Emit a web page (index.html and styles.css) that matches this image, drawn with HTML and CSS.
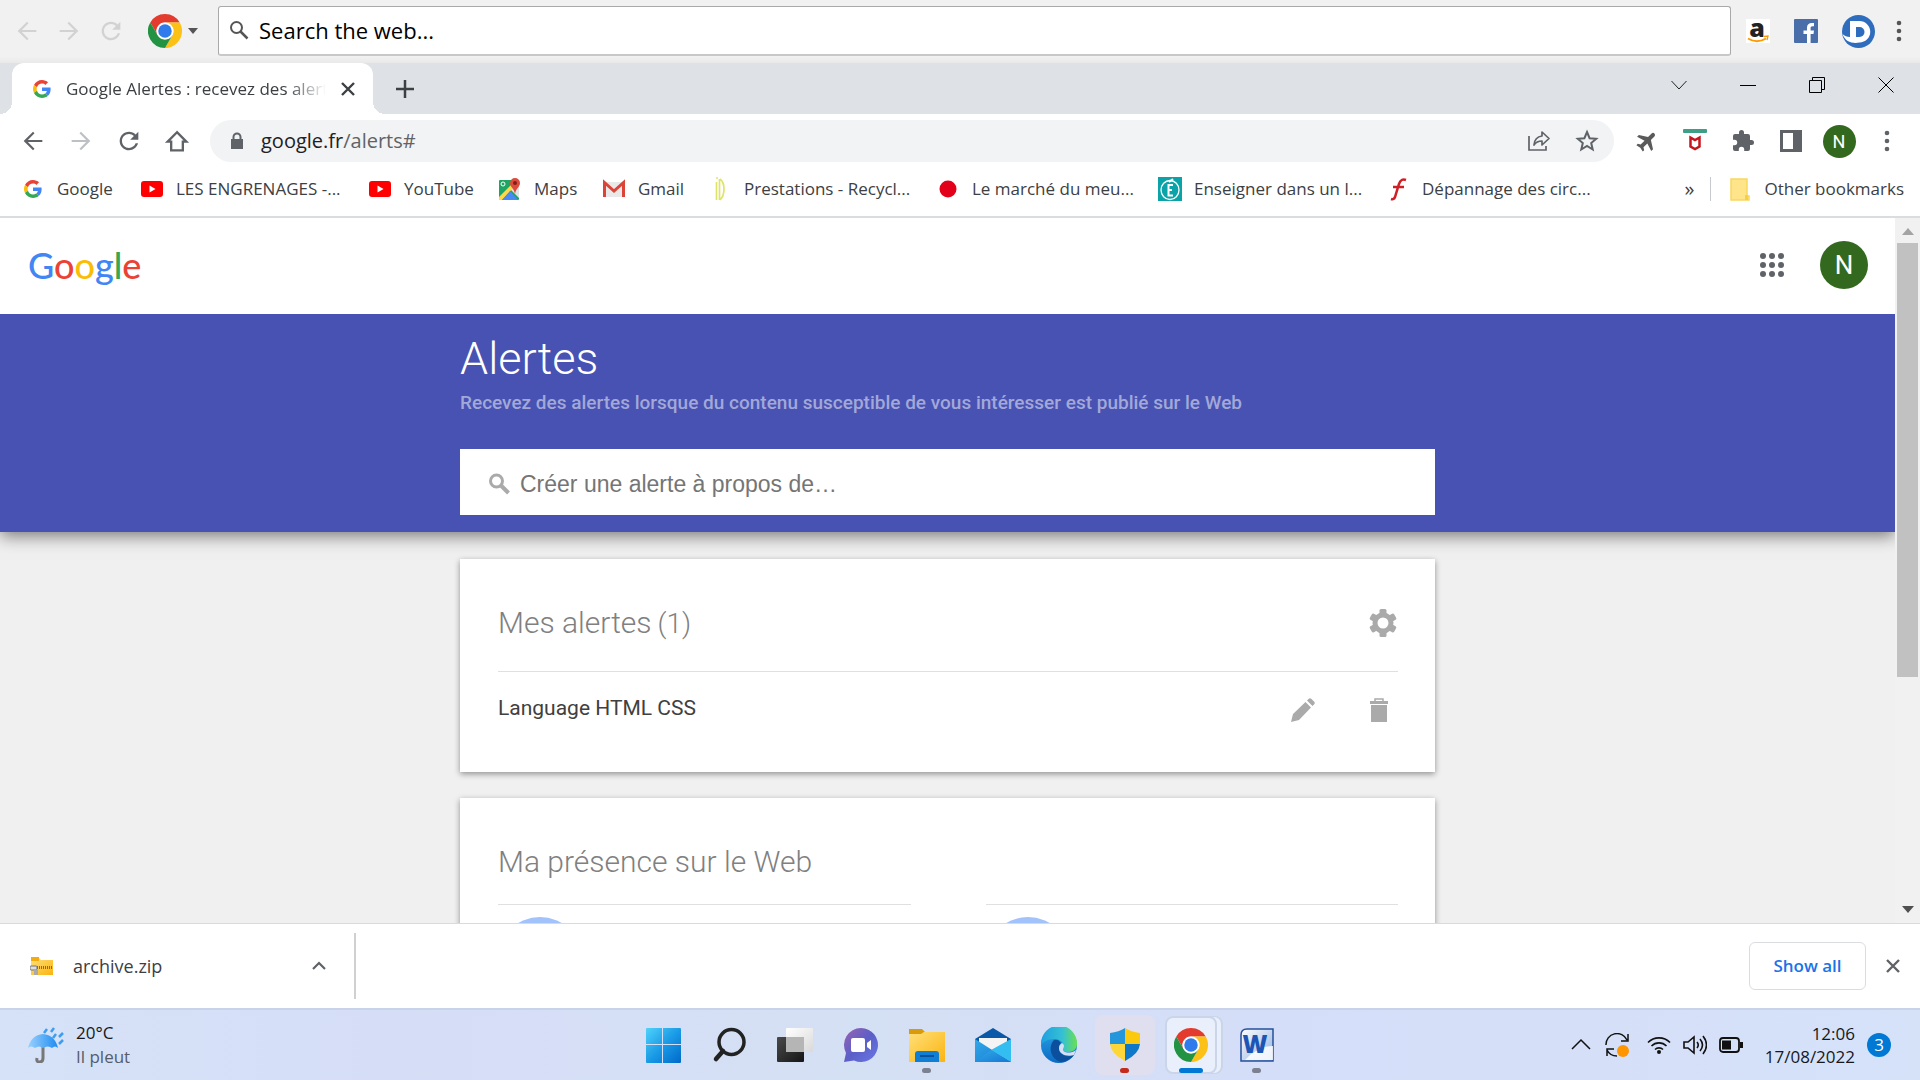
FILE: index.html
```html
<!DOCTYPE html>
<html lang="fr">
<head>
<meta charset="utf-8">
<title>Google Alertes</title>
<link rel="stylesheet" href="styles.css">
</head>
<body>
<svg class="defs" aria-hidden="true">
  <defs>
    <linearGradient id="win" x1="0" y1="0" x2="1" y2="1"><stop offset="0" stop-color="#4fd3fb"/><stop offset=".5" stop-color="#1a9be6"/><stop offset="1" stop-color="#0069c9"/></linearGradient>
    <linearGradient id="dark" x1="0" y1="0" x2="1" y2="1"><stop offset="0" stop-color="#4a4a4a"/><stop offset="1" stop-color="#151515"/></linearGradient>
    <linearGradient id="light" x1="0" y1="0" x2="1" y2="1"><stop offset="0" stop-color="#fff"/><stop offset="1" stop-color="#d9d9d9"/></linearGradient>
    <linearGradient id="chat" x1="0" y1="0" x2="1" y2="1"><stop offset="0" stop-color="#9a63b0"/><stop offset=".5" stop-color="#5b5fc7"/><stop offset="1" stop-color="#6a78e8"/></linearGradient>
    <linearGradient id="gold" x1="0" y1="0" x2="1" y2="1"><stop offset="0" stop-color="#ffe07a"/><stop offset="1" stop-color="#fbb411"/></linearGradient>
    <linearGradient id="edge1" x1="0" y1="0" x2="1" y2="0"><stop offset="0" stop-color="#1e9fe0"/><stop offset=".6" stop-color="#35c1d3"/><stop offset="1" stop-color="#6be04f"/></linearGradient>
    <linearGradient id="edge2" x1="0" y1="0" x2="0" y2="1"><stop offset="0" stop-color="#2aa5e8"/><stop offset="1" stop-color="#0b6bc4"/></linearGradient>
    <linearGradient id="mail" x1="0" y1="0" x2="1" y2="1"><stop offset="0" stop-color="#33a9e8"/><stop offset="1" stop-color="#1478d4"/></linearGradient>
    <linearGradient id="rain" x1="0" y1="0" x2="1" y2="0"><stop offset="0" stop-color="#9bd0ff"/><stop offset="1" stop-color="#1c8df0"/></linearGradient>
    <linearGradient id="word" x1="0" y1="0" x2="1" y2="1"><stop offset="0" stop-color="#fff"/><stop offset="1" stop-color="#8eb0e0"/></linearGradient>
  </defs>
  <symbol id="i-back" viewBox="0 0 24 24"><path fill="currentColor" d="M20 11.100H7.600l5.700-5.700L12 4l-8 8 8 8 1.300-1.400-5.700-5.700H20z"/></symbol>
  <symbol id="i-fwd" viewBox="0 0 24 24"><path fill="currentColor" d="M4 11.100h12.400l-5.700-5.700L12 4l8 8-8 8-1.300-1.400 5.700-5.700H4z"/></symbol>
  <symbol id="i-reload" viewBox="0 0 24 24"><path fill="currentColor" d="M17.650 6.350C16.200 4.900 14.210 4 12 4c-4.420 0-7.990 3.580-7.990 8s3.570 8 7.990 8c3.730 0 6.840-2.550 7.730-6h-2.080c-.82 2.330-3.040 4-5.650 4-3.310 0-6-2.690-6-6s2.690-6 6-6c1.660 0 3.140.69 4.220 1.780L13 11h7V4z"/></symbol>
  <symbol id="i-home" viewBox="0 0 24 24"><path fill="none" stroke="currentColor" stroke-width="2" d="M12 4.500l-8 8h3V20h10v-7.500h3z"/></symbol>
  <symbol id="i-search" viewBox="0 0 20 20"><circle cx="7.500" cy="7.500" r="5.500" fill="none" stroke="currentColor" stroke-width="2"/><path d="M11.500 11.500l7 7" stroke="currentColor" stroke-width="2.500"/></symbol>
  <symbol id="i-dots" viewBox="0 0 24 24"><g fill="currentColor"><circle cx="12" cy="4" r="2.300"/><circle cx="12" cy="12" r="2.300"/><circle cx="12" cy="20" r="2.300"/></g></symbol>
  <symbol id="i-x" viewBox="0 0 14 14"><path d="M1 1l12 12M13 1L1 13" stroke="currentColor" stroke-width="2.400"/></symbol>
  <symbol id="i-up" viewBox="0 0 14 14"><path d="M1 10l6-6 6 6" fill="none" stroke="currentColor" stroke-width="2.200"/></symbol>
  <symbol id="i-chrome" viewBox="0 0 48 48"><path fill="#e33b2e" d="M24 12h20.780A24 24 0 0 0 3.210 12L13.600 30A12 12 0 0 1 24 12z"/><path fill="#fbc116" d="M34.400 30L24 48a24 24 0 0 0 20.780-36H24a12 12 0 0 1 10.400 18z"/><path fill="#229342" d="M13.600 30L3.210 12A24 24 0 0 0 24 48l10.400-18a12 12 0 0 1-20.800 0z"/><circle cx="24" cy="24" r="12" fill="#fff"/><circle cx="24" cy="24" r="9.500" fill="#2f7bec"/></symbol>
  <symbol id="i-g" viewBox="0 0 48 48"><path fill="#ea4335" d="M24 9.500c3.540 0 6.710 1.220 9.210 3.600l6.850-6.850C35.900 2.380 30.470 0 24 0 14.620 0 6.510 5.380 2.560 13.220l7.980 6.190C12.430 13.720 17.740 9.500 24 9.500z"/><path fill="#4285f4" d="M46.980 24.550c0-1.570-.15-3.090-.38-4.550H24v9.020h12.940c-.58 2.960-2.260 5.480-4.780 7.180l7.730 6c4.510-4.180 7.090-10.360 7.090-17.650z"/><path fill="#fbbc05" d="M10.530 28.590c-.48-1.450-.76-2.990-.76-4.590s.27-3.140.76-4.590l-7.980-6.190C.92 16.460 0 20.120 0 24s.92 7.540 2.560 10.780z"/><path fill="#34a853" d="M24 48c6.480 0 11.930-2.130 15.890-5.810l-7.730-6c-2.150 1.450-4.920 2.300-8.160 2.300-6.260 0-11.570-4.220-13.470-9.910l-7.980 6.190C6.510 42.620 14.620 48 24 48z"/></symbol>
  <symbol id="i-yt" viewBox="0 0 24 24"><rect x="1" y="4" width="22" height="16" rx="3" fill="#f00"/><path d="M9.500 8.500v7l6-3.500z" fill="#fff"/></symbol>
</svg>

<header class="launcher">
  <nav class="launcher-nav">
    <button aria-label="Back"><svg class="ic28"><use href="#i-back"/></svg></button>
    <button aria-label="Forward"><svg class="ic28"><use href="#i-fwd"/></svg></button>
    <button aria-label="Reload"><svg class="ic28"><use href="#i-reload"/></svg></button>
  </nav>
  <button class="engine" aria-label="Search engine"><svg class="ic34"><use href="#i-chrome"/></svg><svg class="caret" viewBox="0 0 10 6"><path d="M0 0h10L5 6z" fill="#555"/></svg></button>
  <label class="websearch"><svg class="ic20"><use href="#i-search"/></svg><input type="text" aria-label="Search the web" placeholder="Search the web..."></label>
  <div class="launcher-apps">
    <a href="#" aria-label="Amazon"><svg class="ic24 open" viewBox="0 0 24 24"><rect width="24" height="24" fill="#fff"/><text x="11" y="18" text-anchor="middle" font-family="Open Sans, sans-serif" font-weight="800" font-size="25" fill="#222">a</text><path d="M2 19.500q9 5.500 18 0" fill="none" stroke="#f90" stroke-width="2"/><path d="M18 17.500l4-.5-1 4" fill="none" stroke="#f90" stroke-width="1.300"/></svg></a>
    <a href="#" aria-label="Facebook"><svg class="ic24" viewBox="0 0 24 24"><rect width="24" height="24" rx="1" fill="#4a6ea9"/><path fill="#fff" d="M13 24v-9h-3.500v-3.600H13V8.600C13 5.500 15 4 17.700 4c1.300 0 2.300.1 2.300.1v3.200h-1.500c-1.500 0-1.900.8-1.900 1.800v2.300H20l-.5 3.600h-2.900v9z"/></svg></a>
    <a href="#" aria-label="D"><svg class="ic33" viewBox="0 0 33 33"><circle cx="16.500" cy="16.500" r="16.500" fill="#2e6cbd"/><path fill="#fff" d="M8 6h9.500a10.500 10.500 0 0 1 0 21.500C11 29 3 27 .5 19q3 3 7.500 3z"/><path fill="#2e6cbd" d="M14 12h3.500a5 5 0 0 1 0 10H14z"/></svg></a>
    <button aria-label="More"><svg class="ic24"><use href="#i-dots"/></svg></button>
  </div>
</header>

<div class="tabstrip">
  <div class="tab"><svg class="ic18"><use href="#i-g"/></svg><span class="tab-title">Google Alertes : recevez des alertes</span><button aria-label="Close tab"><svg class="ic14"><use href="#i-x"/></svg></button></div>
  <button class="newtab" aria-label="New tab"><svg class="ic18" viewBox="0 0 18 18"><path d="M9 0v18M0 9h18" stroke="currentColor" stroke-width="2.500"/></svg></button>
  <div class="winctl">
    <button aria-label="Tab search"><svg class="ic16" viewBox="0 0 16 16"><path d="M.5 4l7.500 8 7.500-8" fill="none" stroke="#222"/></svg></button>
    <button aria-label="Minimize"><svg class="ic16" viewBox="0 0 16 16"><path d="M0 8.500h16" stroke="#000"/></svg></button>
    <button aria-label="Restore"><svg class="ic16" viewBox="0 0 16 16"><path d="M.5 3.500h12v12H.5zM3.500 3V.5h12v12H13" fill="none" stroke="#000"/></svg></button>
    <button aria-label="Close"><svg class="ic16" viewBox="0 0 16 16"><path d="M.5.5l15 15M15.500.5l-15 15" stroke="#000"/></svg></button>
  </div>
</div>

<div class="toolbar">
  <button aria-label="Back"><svg class="ic28"><use href="#i-back"/></svg></button>
  <button class="faded" aria-label="Forward"><svg class="ic28"><use href="#i-fwd"/></svg></button>
  <button aria-label="Reload"><svg class="ic28"><use href="#i-reload"/></svg></button>
  <button aria-label="Home"><svg class="ic28"><use href="#i-home"/></svg></button>
  <div class="omnibox">
    <svg class="ic20" viewBox="0 0 20 20"><path fill="#5f6368" d="M4 8h12v10H4z"/><path d="M6.500 8V6a3.500 3.500 0 0 1 7 0v2" fill="none" stroke="#5f6368" stroke-width="2"/></svg>
    <span class="url">google.fr<span>/alerts#</span></span>
    <button aria-label="Share"><svg class="ic24" viewBox="0 0 24 24"><g fill="none" stroke="currentColor" stroke-width="1.700"><path d="M2 7v14h17v-4"/><path d="M7 16c.5-6 3.500-8.500 8-9V3l7 6.500-7 6.500v-4c-4 0-6 1-8 4z" stroke-linejoin="round"/></g></svg></button>
    <button aria-label="Bookmark"><svg class="ic24" viewBox="0 0 24 24"><path d="M12 3l2.600 6.200 6.600.5-5 4.300 1.500 6.500L12 17l-5.700 3.500L7.800 14l-5-4.300 6.600-.5z" fill="none" stroke="currentColor" stroke-width="2"/></svg></button>
  </div>
  <button aria-label="Flights"><svg class="ic24" viewBox="0 0 24 24"><path transform="rotate(45 12 12)" fill="#5a5a5a" d="M22 16v-2.500l-8-5V3.500a2 2 0 0 0-4 0v5l-8 5V16l8-2.500V19l-2.500 1.500V22.500l4.500-1 4.500 1v-2L14 19v-5.500z"/></svg></button>
  <button aria-label="Security"><svg class="ic24" viewBox="0 0 24 24"><rect y="0" width="24" height="4" rx="1" fill="#3c9f86"/><path d="M7.500 8.500l4.500 2.500 4.500-2.500v9L12 20l-4.500-2.500z" fill="none" stroke="#c4161c" stroke-width="2.500"/></svg></button>
  <button aria-label="Extensions"><svg class="ic24" viewBox="0 0 24 24"><path fill="currentColor" d="M20.500 11H19V7a2 2 0 0 0-2-2h-4V3.500a2.500 2.500 0 0 0-5 0V5H4a2 2 0 0 0-2 2v3.800h1.500a2.700 2.700 0 0 1 0 5.400H2V20a2 2 0 0 0 2 2h3.800v-1.500a2.700 2.700 0 0 1 5.400 0V22H17a2 2 0 0 0 2-2v-4h1.500a2.500 2.500 0 0 0 0-5z"/></svg></button>
  <button aria-label="Side panel"><svg class="ic24" viewBox="0 0 24 24"><path fill="currentColor" fill-rule="evenodd" d="M1 1h22v22H1zm3 3v16h10V4z"/></svg></button>
  <button aria-label="Profile"><span class="avatar small">N</span></button>
  <button aria-label="Menu"><svg class="ic24"><use href="#i-dots"/></svg></button>
</div>

<nav class="bookmarks">
  <a href="#"><svg class="ic24" viewBox="0 0 24 24"><use href="#i-g" x="3" y="3" width="18" height="18"/></svg>Google</a>
  <a href="#"><svg class="ic24"><use href="#i-yt"/></svg>LES ENGRENAGES -...</a>
  <a href="#"><svg class="ic24"><use href="#i-yt"/></svg>YouTube</a>
  <a href="#"><svg class="ic24" viewBox="0 0 24 24"><rect x="1" y="3" width="20" height="20" rx="1" fill="#1fa463"/><path d="M21 6v15L12 12z" fill="#dfe3e6"/><path d="M1 20L15 6l2 3L4 23H1z" fill="#fdd84b"/><path d="M4 23l8-9 8 9z" fill="#4a89f3"/><path d="M17 1a5 5 0 0 1 5 5c0 4-4 5-5 11-1-6-5-7-5-11a5 5 0 0 1 5-5z" fill="#dd4b3e"/><circle cx="17" cy="6" r="2" fill="#7d2117"/><circle cx="5" cy="7" r="2" fill="none" stroke="#fff"/></svg>Maps</a>
  <a href="#"><svg class="ic24" viewBox="0 0 24 24"><path d="M2 5h20v15H2z" fill="#e9e9e9"/><path d="M2.500 20V5.500L12 14l9.500-8.500V20" fill="none" stroke="#db4437" stroke-width="3"/></svg>Gmail</a>
  <a href="#"><svg class="ic24" viewBox="0 0 24 24"><path d="M8.500 5v18M11.500 2v21M12 2q4 3 4 10t-4 11M8 1h2" fill="none" stroke="#dfe36a" stroke-width="1.700"/></svg>Prestations - Recycl...</a>
  <a href="#"><svg class="ic24" viewBox="0 0 24 24"><circle cx="12" cy="12" r="8.500" fill="#e3001b"/></svg>Le marché du meu...</a>
  <a href="#"><svg class="ic24" viewBox="0 0 24 24"><rect width="24" height="24" fill="#0aa3a8"/><ellipse cx="12" cy="13" rx="9" ry="9.500" fill="none" stroke="#fff" stroke-width="1.300"/><path d="M15 8h-4.500v10.500H15M10.500 13H14M11 5l4-3" fill="none" stroke="#fff" stroke-width="2"/></svg>Enseigner dans un l...</a>
  <a href="#"><svg class="ic24" viewBox="0 0 24 24"><path d="M20 3q-5-2-7 4L9 20q-1 3-4 2M7 10h11" fill="none" stroke="#cf1f26" stroke-width="2.500"/></svg>Dépannage des circ...</a>
  <button class="more" aria-label="More bookmarks">»</button>
  <a href="#" class="other"><svg class="ic24" viewBox="0 0 24 24"><path d="M3 2h16v17h2v4H3z" fill="#ffe48a" stroke="#f9d85d" stroke-width="1.500"/><path d="M17 23v-5h3v5z" fill="#f6cf45"/></svg>Other bookmarks</a>
</nav>

<div class="viewport">
  <main class="page">
    <div class="ghead">
      <a href="#" class="glogo" aria-label="Google"><span class="b">G</span><span class="r">o</span><span class="y">o</span><span class="b">g</span><span class="g">l</span><span class="r">e</span></a>
      <button aria-label="Applications"><svg class="ic24" viewBox="0 0 24 24"><g fill="#5f6368"><circle cx="3" cy="3" r="3"/><circle cx="12" cy="3" r="3"/><circle cx="21" cy="3" r="3"/><circle cx="3" cy="12" r="3"/><circle cx="12" cy="12" r="3"/><circle cx="21" cy="12" r="3"/><circle cx="3" cy="21" r="3"/><circle cx="12" cy="21" r="3"/><circle cx="21" cy="21" r="3"/></g></svg></button>
      <button class="account" aria-label="Compte"><span class="avatar">N</span></button>
    </div>
    <section class="hero">
      <div class="column">
        <h1>Alertes</h1>
        <p>Recevez des alertes lorsque du contenu susceptible de vous intéresser est publié sur le Web</p>
        <label class="create"><svg class="ic22" viewBox="0 0 22 22"><circle cx="8.500" cy="8" r="6" fill="none" stroke="#aaa" stroke-width="3"/><path d="M13 12.500l7.500 7.500" stroke="#aaa" stroke-width="4"/></svg><input type="text" aria-label="Créer une alerte" placeholder="Créer une alerte à propos de…"></label>
      </div>
    </section>
    <div class="column cards">
      <section class="card">
        <div class="card-head">
          <h2>Mes alertes <span>(1)</span></h2>
          <button aria-label="Paramètres"><svg class="ic28" viewBox="0 0 28 28"><g fill="#aaa"><rect x="10.500" y="0" width="7" height="28" rx="1.500"/><rect x="10.500" y="0" width="7" height="28" rx="1.500" transform="rotate(60 14 14)"/><rect x="10.500" y="0" width="7" height="28" rx="1.500" transform="rotate(120 14 14)"/><circle cx="14" cy="14" r="10.500"/></g><circle cx="14" cy="14" r="5.500" fill="#fff"/></svg></button>
        </div>
        <div class="alert-row">
          <a href="#">Language HTML CSS</a>
          <button aria-label="Modifier"><svg class="ic24" viewBox="0 0 24 24"><path fill="#aaa" d="M0 24l2-8L14.500 4l5.500 5.500L8 22zM16 2.500l1.500-1.500q1.500-1.500 3 0L23 3.500q1.500 1.500 0 3L21.500 8z"/></svg></button>
          <button aria-label="Supprimer"><svg class="ic24" viewBox="0 0 24 24"><path fill="#aaa" d="M4 7h16v17H4zM3 3h18v3H3z"/><path d="M8 3V1h8v2" fill="none" stroke="#aaa" stroke-width="1.500"/></svg></button>
        </div>
      </section>
      <section class="card">
        <div class="card-head presence"><h2>Ma présence sur le Web</h2></div>
        <div class="people"><div><span class="disc"></span></div><div><span class="disc"></span></div></div>
      </section>
    </div>
  </main>
  <div class="scrollbar"><svg class="arrow" viewBox="0 0 12 7"><path d="M0 7l6-7 6 7z" fill="#a3a3a3"/></svg><div class="thumb"></div><svg class="arrow" viewBox="0 0 12 7"><path d="M0 0h12L6 7z" fill="#505050"/></svg></div>
</div>

<div class="downloads">
  <div class="file">
    <svg class="ic24" viewBox="0 0 24 24"><path d="M1 4h8l2 2h12v15H1z" fill="url(#gold)"/><path d="M1 3h8v4H1z" fill="#f2ac10"/><path d="M7 13.500h16" stroke="#6d6d6d" stroke-width="3" stroke-dasharray="1 1"/><rect x="0" y="12" width="7" height="4" rx="1" fill="#ddd" stroke="#777"/><rect x="4" y="16" width="4" height="5" fill="#aaa"/></svg>
    <span>archive.zip</span>
    <button aria-label="Options"><svg class="ic14"><use href="#i-up"/></svg></button>
  </div>
  <button class="showall">Show all</button>
  <button class="dl-close" aria-label="Close"><svg class="ic14"><use href="#i-x"/></svg></button>
</div>

<footer class="taskbar">
  <div class="weather">
    <svg class="ic36" viewBox="0 0 36 36"><path d="M15 19v12q0 4-3.500 4T9 31" fill="none" stroke="#777" stroke-width="3"/><path d="M0 21Q3 8 15 7q12 1 15 14-3-3-6 0-4-3-9 0-4-3-8 0-4-3-7 0z" fill="url(#rain)"/><path d="M16 6l3-4M23 5l3-4M25 11l3-4M31 10l4-4M31 17l4-4" stroke="#3d9df0" stroke-width="2.500"/></svg>
    <div><div>20°C</div><div class="muted">Il pleut</div></div>
  </div>
  <div class="apps">
    <button aria-label="Start"><svg class="ic36" viewBox="0 0 36 36"><path fill="url(#win)" d="M1 2q0-1 1-1h15v16H1zM18 1h17q1 0 1 1v15H18zM1 18h16v18H2q-1 0-1-1zM18 18h18v17q0 1-1 1H18z"/></svg></button>
    <button aria-label="Search"><svg class="ic36" viewBox="0 0 36 36"><circle cx="20.500" cy="15" r="12.500" fill="none" stroke="#222" stroke-width="3.500"/><path d="M12 24l-7 8" stroke="#222" stroke-width="4.500" stroke-linecap="round"/></svg></button>
    <button aria-label="Task view"><svg class="ic36" viewBox="0 0 36 36"><rect x="0" y="10" width="27" height="25" rx="1" fill="url(#dark)"/><rect x="9" y="1" width="27" height="24" rx="1" fill="url(#light)"/><path d="M9 10h18v15H9z" fill="#b5b5b5"/></svg></button>
    <button aria-label="Chat"><svg class="ic36" viewBox="0 0 36 36"><path d="M18 1a17 17 0 1 1-7 32.500L1 35l2-9A17 17 0 0 1 18 1z" fill="url(#chat)"/><rect x="8" y="11" width="14" height="14" rx="2" fill="#fff"/><path d="M24 16l4-3v10l-4-3z" fill="#fff"/></svg></button>
    <button class="run" aria-label="Explorer"><svg class="ic36" viewBox="0 0 36 36"><path d="M0 2h13l3 3v6H0z" fill="#d99a0c"/><path d="M0 7h12l3-2h21v30H0z" fill="url(#gold)"/><path d="M6 35V27q0-3 3-3h18q3 0 3 3v8z" fill="#0f7fd6"/><path d="M11 29h14" stroke="#0a4f9a" stroke-width="2"/></svg></button>
    <button aria-label="Mail"><svg class="ic36" viewBox="0 0 36 36"><path d="M0 12L18 1l18 11v8H0z" fill="#0a58a8"/><path d="M4 11h28v8L18 28 4 19z" fill="#f4f4f4"/><path d="M0 12l36 23H0z" fill="url(#mail)"/><path d="M36 12v23L16 23z" fill="#34bdf0"/><path d="M0 35l16-12 20 12z" fill="url(#mail)"/></svg></button>
    <button aria-label="Edge"><svg class="ic36" viewBox="0 0 36 36"><circle cx="18" cy="18" r="18" fill="url(#edge2)"/><path d="M0 16A18 18 0 0 1 36 17c0 5-4 8-8 8-5 0-8-1-6-4 2-4-2-9-9-9-6 0-11 3-13 6z" fill="url(#edge1)"/><path d="M13 13c-6 6-4 19 7 22 5 0 10-3 13-7-5 3-16 1-15-8 0-2 1-3 2-4-2-3-4-4-7-3z" fill="#0c4f9c"/><path d="M33 28c-6 2-15 0-15-7 0-3 2-4 3-5 3 2 2 4 1 6-1 4 8 5 13 1z" fill="#d6dff6"/></svg></button>
    <button class="run alert" aria-label="Security"><svg class="ic36" viewBox="0 0 36 36"><path d="M18 1v17H3V6q9-1 15-5z" fill="#2496dc"/><path d="M18 1q6 4 15 5v12H18z" fill="#fdc90d"/><path d="M3 17h15v17Q4 27 3 17z" fill="#fdd63a"/><path d="M33 17H18v17q14-7 15-17z" fill="#0f78c8"/></svg></button>
    <button class="run current" aria-label="Chrome"><svg class="ic34"><use href="#i-chrome"/></svg></button>
    <button class="run" aria-label="Word"><svg class="ic36" viewBox="0 0 36 36"><path d="M2 8q0-6 6-6h26v32H2z" fill="url(#word)" stroke="#27509b" stroke-width="1.500"/><path d="M24 20l10-1v14H6l6-6z" fill="#fff" opacity=".85"/><text x="16" y="26" text-anchor="middle" font-family="Open Sans, sans-serif" font-weight="800" font-size="24" fill="#1c55b4">W</text></svg></button>
  </div>
  <div class="tray">
    <svg class="ic24" viewBox="0 0 24 24"><path d="M3 16l9-9 9 9" fill="none" stroke="#111" stroke-width="1.500"/></svg>
    <svg class="ic24 sync" viewBox="0 0 24 24"><path d="M1 12A11 11 0 0 1 22 7M23 1v7h-7M2 23v-7h7M2 17q3 6 10 6" fill="none" stroke="#111" stroke-width="1.500"/><circle cx="18" cy="18" r="6" fill="#ff9500"/></svg>
    <svg class="ic24" viewBox="0 0 24 24"><g fill="none" stroke="#111" stroke-width="1.600"><path d="M1 9.500a15.500 15.500 0 0 1 22 0M4.500 13a10.600 10.600 0 0 1 15 0M8 16.500a5.700 5.700 0 0 1 8 0"/></g><circle cx="12" cy="19" r="2" fill="#111"/></svg>
    <svg class="ic24" viewBox="0 0 24 24"><g fill="none" stroke="#111" stroke-width="1.600"><path d="M1 9h4l6-5v16l-6-5H1z"/><path d="M14 9q2.500 3 0 6M17 6q5 6 0 12M20 3q7 9 0 18"/></g></svg>
    <svg class="ic24" viewBox="0 0 24 24"><rect x="1" y="5" width="19" height="14" rx="3" fill="none" stroke="#111" stroke-width="1.800"/><rect x="3" y="7.500" width="9" height="9" fill="#111"/><path d="M21 12h3" stroke="#111" stroke-width="6"/></svg>
    <div class="clock"><div>12:06</div><div>17/08/2022</div></div>
    <span class="count">3</span>
  </div>
</footer>
</body>
</html>
```
FILE: styles.css
```css
* { box-sizing: border-box; }

body {
  margin: 0;
  height: 100vh;
  display: flex;
  flex-direction: column;
  font: 17px/24px "Open Sans", "Noto Sans", sans-serif;
  color: #3c4043;
  background: #fff;
  overflow: hidden;
}

button, input { font: inherit; color: inherit; border: 0; background: none; padding: 0; margin: 0; }
a { color: inherit; text-decoration: none; }
h1, h2, p { margin: 0; }
svg { display: block; flex: none; }
button { display: flex; align-items: center; justify-content: center; flex: none; }

.defs { position: absolute; width: 0; height: 0; }
.open { overflow: visible; }
.ic14 { width: 14px; height: 14px; }
.ic16 { width: 16px; height: 16px; }
.ic18 { width: 18px; height: 18px; }
.ic20 { width: 20px; height: 20px; }
.ic22 { width: 22px; height: 22px; }
.ic24 { width: 24px; height: 24px; }
.ic28 { width: 28px; height: 28px; }
.ic33 { width: 33px; height: 33px; }
.ic34 { width: 34px; height: 34px; }
.ic36 { width: 36px; height: 36px; }

/* Launcher bar */
.launcher { display: flex; align-items: center; flex: none; padding: 6px 9px 7px 6px; background: linear-gradient(#f1f1f1 90%, #e9e9e9); }
.launcher-nav { display: flex; color: #d2d2d2; }
.launcher-nav button { width: 42px; }
.engine { justify-content: flex-start; gap: 6px; width: 86px; padding-left: 16px; }
.caret { width: 10px; height: 6px; }
.websearch { flex: 1; display: flex; align-items: center; gap: 10px; height: 50px; padding: 0 10px 2px; background: #fff; border: 1px solid #a9a9a9; border-bottom: 2px solid #c8c8c8; border-radius: 3px; color: #555; }
.websearch input { flex: 1; min-width: 0; font-size: 22px; color: #000; outline: 0; }
.websearch input::placeholder { color: #000; opacity: 1; }
.launcher-apps { display: flex; align-items: center; gap: 24px; padding-left: 15px; }
.launcher-apps a:nth-child(3) { margin-right: -12px; }
.launcher-apps button { color: #555; }

/* Tabs */
.tabstrip { display: flex; align-items: center; flex: none; height: 51px; padding-left: 12px; background: #dee1e6; }
.tab { position: relative; display: flex; align-items: center; gap: 15px; width: 361px; height: 100%; padding: 0 18px 0 21px; background: #fff; border-radius: 12px 12px 0 0; }
.tab::before, .tab::after { content: ""; position: absolute; bottom: 0; width: 12px; height: 12px; }
.tab::before { right: 100%; background: radial-gradient(circle at 0 0, #dee1e6 12px, #fff 12px); }
.tab::after { left: 100%; background: radial-gradient(circle at 100% 0, #dee1e6 12px, #fff 12px); }
.tab-title { flex: 1; overflow: hidden; white-space: nowrap; -webkit-mask-image: linear-gradient(90deg, #000 85%, transparent); mask-image: linear-gradient(90deg, #000 85%, transparent); }
.newtab { width: 64px; }
.winctl { display: flex; margin-left: auto; padding-bottom: 8px; }
.winctl button { width: 69px; height: 40px; }

/* Toolbar */
.toolbar { display: flex; align-items: center; flex: none; height: 54px; padding: 0 9px; color: #5f6368; }
.toolbar > button { width: 48px; }
.toolbar .faded { color: #bdc1c6; }
.omnibox { flex: 1; display: flex; align-items: center; height: 42px; margin: 0 9px; padding: 0 3px 0 17px; border-radius: 21px; background: #f1f3f4; }
.omnibox button { width: 48px; }
.url { flex: 1; padding-left: 14px; font-size: 20px; color: #202124; }
.url span { color: #5f6368; }
.avatar { display: flex; align-items: center; justify-content: center; width: 48px; height: 48px; border-radius: 50%; background: #33691e; color: #fff; font: 26px/48px Roboto, sans-serif; }
.avatar.small { width: 33px; height: 33px; font-size: 18px; line-height: 33px; }

/* Bookmarks */
.bookmarks { display: grid; grid-template-columns: 119px 228px 130px 104px 106px 228px 222px 228px 1fr 26px auto; align-items: center; flex: none; height: 50px; padding: 0 16px 6px 21px; border-bottom: 2px solid #dadce0; white-space: nowrap; }
.bookmarks a { display: flex; align-items: center; gap: 12px; }
.bookmarks .more { font-size: 20px; }
.bookmarks .other { margin-left: 8px; padding-left: 17px; border-left: 1px solid #c6c9cd; }

/* Page */
.viewport { flex: 1; min-height: 0; display: flex; overflow: hidden; }
.page { flex: 1; min-width: 0; background: #f0f0f0; overflow: hidden; }
.ghead { position: relative; display: flex; align-items: center; height: 96px; padding: 0 27px 2px 28px; background: #fff; }
.glogo { margin-right: auto; font: 36px/48px Lato, sans-serif; font-weight: 500; }
.b { color: #4285f4; }
.r { color: #ea4335; }
.y { color: #fbbc05; }
.g { color: #34a853; }
.account { margin-left: 36px; }
.column { width: 975px; max-width: 100%; margin: 0 auto; }
.hero { padding: 15px 0 17px; background: #4852b2; box-shadow: 0 4px 16px rgba(0, 0, 0, .5); font-family: Roboto, sans-serif; }
.hero h1 { font-size: 45px; font-weight: 300; line-height: 60px; color: #fff; }
.hero p { font-size: 19px; font-weight: 500; line-height: 28px; color: #a2a8d8; }
.create { display: flex; align-items: center; gap: 10px; height: 66px; margin-top: 32px; padding: 4px 28px 0; background: #fff; }
.create input { flex: 1; min-width: 0; height: 40px; font: 23px/30px "Liberation Sans", Arial, sans-serif; outline: 0; }
.create input::placeholder { color: #757575; opacity: 1; }
.cards { display: flex; flex-direction: column; gap: 26px; padding-top: 27px; font-family: Roboto, sans-serif; }
.card { padding: 0 37px 36px 38px; background: #fff; box-shadow: 0 2px 6px rgba(0, 0, 0, .4); }
.card-head { display: flex; align-items: center; justify-content: space-between; height: 113px; padding: 16px 1px 0 0; border-bottom: 1px solid #e0e0e0; }
.card-head h2 { display: flex; align-items: flex-end; gap: 6px; font-size: 30px; font-weight: 300; line-height: 40px; color: #808080; }
.card-head h2 span { font-size: 28px; line-height: 38px; }
.presence { height: 106px; padding-top: 22px; border-bottom: 0; }
.alert-row { display: flex; align-items: center; height: 64px; padding-top: 12px; }
.alert-row a { flex: 1; font-size: 21px; line-height: 28px; padding-bottom: 4px; color: #404040; }
.alert-row button { margin-right: 7px; }
.alert-row button + button { margin-left: 45px; }
.people { display: grid; grid-template-columns: 1fr 1fr; gap: 75px; }
.people > div { height: 120px; padding: 12px 0; border-top: 1px solid #e0e0e0; }
.disc { display: block; width: 84px; height: 84px; border-radius: 50%; background: #a1c2fa; }
.scrollbar { display: flex; flex-direction: column; align-items: center; gap: 8px; width: 25px; padding: 10px 0; background: #f1f1f1; }
.arrow { width: 12px; height: 7px; }
.arrow:last-child { margin-top: auto; }
.thumb { width: 21px; height: 434px; background: #c1c1c1; }

/* Downloads */
.downloads { display: flex; align-items: center; flex: none; height: 85px; padding: 0 20px 0 30px; border-top: 1px solid #dadada; }
.file { display: flex; align-items: center; width: 326px; height: 66px; padding-right: 28px; border-right: 2px solid #d0d0d0; margin-right: auto; font-size: 18px; }
.file span { flex: 1; padding-left: 19px; }
.showall { width: 117px; height: 48px; border: 1px solid #dadce0; border-radius: 6px; color: #1a73e8; font-weight: 600; }
.dl-close { margin-left: 20px; }
.downloads button svg { color: #5f6368; }

/* Taskbar */
.taskbar { display: grid; grid-template-columns: 1fr auto 1fr; align-items: center; flex: none; height: 72px; padding: 0 29px 0 28px; background: linear-gradient(90deg, #d5e2f7, #d6def7 20%, #d4e0f4 45%, #d5def8 65%, #d5e2f8); border-top: 2px solid #c8d2e9; color: #15181d; }
.weather { display: flex; align-items: center; gap: 12px; }
.muted { color: #555c68; }
.apps { display: flex; }
.apps button { position: relative; width: 60px; height: 60px; margin: 0 3px; border-radius: 8px; }
.run::after { content: ""; position: absolute; bottom: 2px; width: 9px; height: 5px; border-radius: 3px; background: #7b8190; }
.apps .alert { background: #e0dff0; }
.alert::after { background: #c42b1c; }
.apps .current { width: 52px; height: 58px; margin: 1px 7px; background: #eaf0fb; border: 2px solid #cad5ea; box-shadow: 5px 0 0 -1px #eaf0fb, 6px 0 0 #cad5ea; }
.current::after { width: 24px; bottom: -1px; background: #0078d4; }
.tray { display: flex; align-items: center; justify-content: flex-end; gap: 12px; }
.sync { margin-right: 6px; }
.clock { min-width: 100px; text-align: right; line-height: 23px; }
.count { width: 24px; height: 24px; border-radius: 50%; background: #0078d4; color: #fff; text-align: center; }
```
